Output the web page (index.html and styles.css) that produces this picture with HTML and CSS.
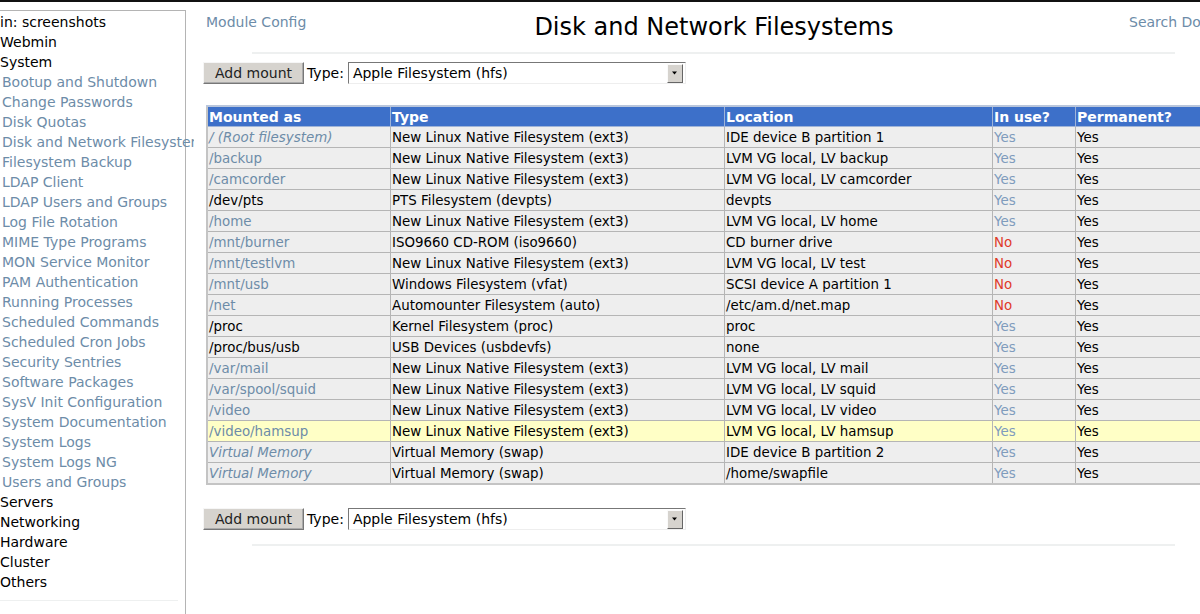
FILE: index.html
```html
<!DOCTYPE html>
<html>
<head>
<meta charset="utf-8">
<title>Disk and Network Filesystems</title>
<link rel="stylesheet" href="styles.css">
</head>
<body>
<div class="page">
  <nav class="side">
    <div class="cat">in: screenshots</div>
    <div class="cat">Webmin</div>
    <div class="cat">System</div>
    <a class="mod">Bootup and Shutdown</a>
    <a class="mod">Change Passwords</a>
    <a class="mod">Disk Quotas</a>
    <a class="mod">Disk and Network Filesystems</a>
    <a class="mod">Filesystem Backup</a>
    <a class="mod">LDAP Client</a>
    <a class="mod">LDAP Users and Groups</a>
    <a class="mod">Log File Rotation</a>
    <a class="mod">MIME Type Programs</a>
    <a class="mod">MON Service Monitor</a>
    <a class="mod">PAM Authentication</a>
    <a class="mod">Running Processes</a>
    <a class="mod">Scheduled Commands</a>
    <a class="mod">Scheduled Cron Jobs</a>
    <a class="mod">Security Sentries</a>
    <a class="mod">Software Packages</a>
    <a class="mod">SysV Init Configuration</a>
    <a class="mod">System Documentation</a>
    <a class="mod">System Logs</a>
    <a class="mod">System Logs NG</a>
    <a class="mod">Users and Groups</a>
    <div class="cat">Servers</div>
    <div class="cat">Networking</div>
    <div class="cat">Hardware</div>
    <div class="cat">Cluster</div>
    <div class="cat">Others</div>
    <div class="side-rule"></div>
  </nav>
  <main class="main">
    <header class="head">
      <a class="headlink">Module Config</a>
      <h1 class="title">Disk and Network Filesystems</h1>
      <a class="headlink right">Search Docs..</a>
    </header>
    <div class="rule"></div>
    <form class="addbar">
      <button type="button" class="btn">Add mount</button>
      <span class="lbl">Type:</span>
      <span class="select"><span class="selval">Apple Filesystem (hfs)</span><span class="arrow"><svg width="9" height="6" viewBox="0 0 9 6"><path d="M2 1.5h5L4.5 4.5z" fill="#000"/></svg></span></span>
    </form>
    <table class="mounts">
      <thead>
        <tr><th class="c1">Mounted as</th><th class="c2">Type</th><th class="c3">Location</th><th class="c4">In use?</th><th class="c5">Permanent?</th></tr>
      </thead>
      <tbody>
        <tr><td><a class="lnk it">/ (Root filesystem)</a></td><td>New Linux Native Filesystem (ext3)</td><td>IDE device B partition 1</td><td class="yes">Yes</td><td>Yes</td></tr>
        <tr><td><a class="lnk">/backup</a></td><td>New Linux Native Filesystem (ext3)</td><td>LVM VG local, LV backup</td><td class="yes">Yes</td><td>Yes</td></tr>
        <tr><td><a class="lnk">/camcorder</a></td><td>New Linux Native Filesystem (ext3)</td><td>LVM VG local, LV camcorder</td><td class="yes">Yes</td><td>Yes</td></tr>
        <tr><td>/dev/pts</td><td>PTS Filesystem (devpts)</td><td>devpts</td><td class="yes">Yes</td><td>Yes</td></tr>
        <tr><td><a class="lnk">/home</a></td><td>New Linux Native Filesystem (ext3)</td><td>LVM VG local, LV home</td><td class="yes">Yes</td><td>Yes</td></tr>
        <tr><td><a class="lnk">/mnt/burner</a></td><td>ISO9660 CD-ROM (iso9660)</td><td>CD burner drive</td><td class="no">No</td><td>Yes</td></tr>
        <tr><td><a class="lnk">/mnt/testlvm</a></td><td>New Linux Native Filesystem (ext3)</td><td>LVM VG local, LV test</td><td class="no">No</td><td>Yes</td></tr>
        <tr><td><a class="lnk">/mnt/usb</a></td><td>Windows Filesystem (vfat)</td><td>SCSI device A partition 1</td><td class="no">No</td><td>Yes</td></tr>
        <tr><td><a class="lnk">/net</a></td><td>Automounter Filesystem (auto)</td><td>/etc/am.d/net.map</td><td class="no">No</td><td>Yes</td></tr>
        <tr><td>/proc</td><td>Kernel Filesystem (proc)</td><td>proc</td><td class="yes">Yes</td><td>Yes</td></tr>
        <tr><td>/proc/bus/usb</td><td>USB Devices (usbdevfs)</td><td>none</td><td class="yes">Yes</td><td>Yes</td></tr>
        <tr><td><a class="lnk">/var/mail</a></td><td>New Linux Native Filesystem (ext3)</td><td>LVM VG local, LV mail</td><td class="yes">Yes</td><td>Yes</td></tr>
        <tr><td><a class="lnk">/var/spool/squid</a></td><td>New Linux Native Filesystem (ext3)</td><td>LVM VG local, LV squid</td><td class="yes">Yes</td><td>Yes</td></tr>
        <tr><td><a class="lnk">/video</a></td><td>New Linux Native Filesystem (ext3)</td><td>LVM VG local, LV video</td><td class="yes">Yes</td><td>Yes</td></tr>
        <tr class="hl"><td><a class="lnk">/video/hamsup</a></td><td>New Linux Native Filesystem (ext3)</td><td>LVM VG local, LV hamsup</td><td class="yes">Yes</td><td>Yes</td></tr>
        <tr><td><a class="lnk it">Virtual Memory</a></td><td>Virtual Memory (swap)</td><td>IDE device B partition 2</td><td class="yes">Yes</td><td>Yes</td></tr>
        <tr><td><a class="lnk it">Virtual Memory</a></td><td>Virtual Memory (swap)</td><td>/home/swapfile</td><td class="yes">Yes</td><td>Yes</td></tr>
      </tbody>
    </table>
    <form class="addbar second">
      <button type="button" class="btn">Add mount</button>
      <span class="lbl">Type:</span>
      <span class="select"><span class="selval">Apple Filesystem (hfs)</span><span class="arrow"><svg width="9" height="6" viewBox="0 0 9 6"><path d="M2 1.5h5L4.5 4.5z" fill="#000"/></svg></span></span>
    </form>
    <div class="rule bottom"></div>
  </main>
</div>
</body>
</html>
```

FILE: styles.css
```css
html, body {
  margin: 0;
  padding: 0;
  background: #fff;
  overflow: hidden;
}
body {
  font-family: "DejaVu Sans", Verdana, sans-serif;
  color: #000;
  width: 1200px;
  height: 614px;
}
.page {
  border-top: 2px solid #111;
  display: flex;
  width: 1260px;
  height: 612px;
}
.side {
  width: 186px;
  flex: none;
  margin-top: 8px;
  border-top: 1px solid #b4b4b4;
  border-right: 1px solid #b4b4b4;
  box-sizing: border-box;
  font-size: 14px;
  line-height: 20px;
  padding-top: 1px;
  white-space: nowrap;
  overflow: visible;
  clip-path: inset(0 -8px 0 0);
  display: flex;
  flex-direction: column;
  position: relative;
  z-index: 1;
}
.side .cat {
  color: #000;
}
.side .mod {
  color: #6d8ca8;
  padding-left: 2px;
}
.side-rule {
  margin-top: 8px;
  width: 178px;
  border-top: 1px solid #eef0f0;
}
.main {
  width: 1056px;
  flex: none;
  padding: 0 0 0 20px;
  box-sizing: border-box;
}
.head {
  display: flex;
  align-items: center;
  height: 46px;
}
.headlink {
  color: #6d8ca8;
  font-size: 14px;
  width: 150px;
  margin-top: -6px;
  white-space: nowrap;
}
.headlink.right {
  padding-left: 57px;
  box-sizing: border-box;
  width: 170px;
}
.title {
  width: 716px;
  flex: none;
  text-align: center;
  font-weight: normal;
  font-size: 24px;
  margin: 0;
  padding-top: 4px;
}
.rule {
  border-top: 2px solid #eef0f0;
  margin: 4px 67px 0 46px;
}
.addbar {
  display: flex;
  align-items: center;
  margin-top: 7px;
  height: 24px;
  font-size: 14px;
  margin-left: -3px;
}
.btn {
  font-family: inherit;
  font-size: 14px;
  height: 22px;
  padding: 0 11px;
  background: #d6d3ce;
  color: #222;
  border: 1px solid;
  border-color: #f6f6f6 #777 #777 #f6f6f6;
  box-shadow: inset -1px -1px 0 #aaa;
  margin-right: 3px;
}
.lbl {
  margin-right: 4px;
}
.select {
  display: flex;
  align-items: center;
  width: 338px;
  height: 22px;
  box-sizing: border-box;
  border: 1px solid;
  border-color: #777 #eee #eee #777;
  background: #fff;
}
.selval {
  flex: 1;
  padding-left: 4px;
}
.arrow {
  width: 14px;
  height: 17px;
  margin-right: 2px;
  background: #d6d3ce;
  border: 1px solid;
  border-color: #fafafa #666 #666 #fafafa;
  display: flex;
  align-items: center;
  justify-content: center;
}
.mounts {
  margin-top: 20px;
  border-collapse: collapse;
  border: 2px solid #c4c4c4;
  width: 1020px;
  font-size: 13.4px;
}
.mounts th {
  background: #3d70c9;
  color: #fff;
  text-align: left;
  font-weight: bold;
  font-size: 14px;
  height: 19px;
  padding: 0 1px;
  border: 1px solid #9fb4d8;
  border-top: 2px solid #b9c6dc;
}
.mounts td {
  background: #eeeeee;
  height: 20px;
  padding: 0 1px;
  border: 1px solid #b5b5b5;
  white-space: nowrap;
}
.mounts .hl td {
  background: #ffffc6;
}
.c1 { width: 180px; }
.c2 { width: 331px; }
.c3 { width: 265px; }
.c4 { width: 80px; }
.lnk {
  color: #6d8ca8;
}
.lnk.it {
  font-style: italic;
}
.yes {
  color: #7f9cbd;
}
.no {
  color: #e03a2a;
}
.addbar.second {
  margin-top: 22px;
}
.rule.bottom {
  margin-top: 13px;
}
```
